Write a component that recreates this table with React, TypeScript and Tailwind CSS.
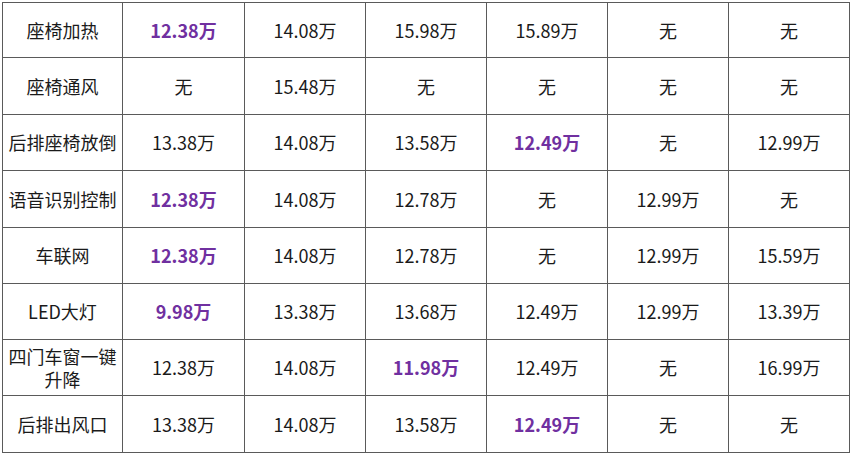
import React from "react";

type Cell = { t: string; hl?: boolean };

const P = (t: string): Cell => ({ t, hl: true });
const N = (t: string): Cell => ({ t });

const rows: { label: React.ReactNode; cells: Cell[]; h: string }[] = [
  { label: "座椅加热", h: "h-[54px]", cells: [P("12.38万"), N("14.08万"), N("15.98万"), N("15.89万"), N("无"), N("无")] },
  { label: "座椅通风", h: "h-[56px]", cells: [N("无"), N("15.48万"), N("无"), N("无"), N("无"), N("无")] },
  { label: "后排座椅放倒", h: "h-[55px]", cells: [N("13.38万"), N("14.08万"), N("13.58万"), P("12.49万"), N("无"), N("12.99万")] },
  { label: "语音识别控制", h: "h-[56px]", cells: [P("12.38万"), N("14.08万"), N("12.78万"), N("无"), N("12.99万"), N("无")] },
  { label: "车联网", h: "h-[55px]", cells: [P("12.38万"), N("14.08万"), N("12.78万"), N("无"), N("12.99万"), N("15.59万")] },
  { label: "LED大灯", h: "h-[55px]", cells: [P("9.98万"), N("13.38万"), N("13.68万"), N("12.49万"), N("12.99万"), N("13.39万")] },
  {
    label: (
      <>
        <span className="block">四门车窗一键</span>
        <span className="block">升降</span>
      </>
    ),
    h: "h-[55px]",
    cells: [N("12.38万"), N("14.08万"), P("11.98万"), N("12.49万"), N("无"), N("16.99万")],
  },
  { label: "后排出风口", h: "h-[56px]", cells: [N("13.38万"), N("14.08万"), N("13.58万"), P("12.49万"), N("无"), N("无")] },
];

export default function App() {
  return (
    <div
      className="w-[852px] h-[455px] bg-white pl-[2px] pt-[2px]"
      style={{ fontFamily: '"Noto Sans CJK SC", "Noto Sans", sans-serif' }}
    >
      <div className="inline-grid grid-cols-[119px_121px_120px_120px_120px_120px_120px] gap-px bg-[#5a5a5a] p-px">
        {rows.map((r, i) => (
          <React.Fragment key={i}>
            <div
              className={`${r.h} bg-white flex flex-col items-center justify-center text-center text-[18px] leading-[23px] text-[#1a1a1a]`}
            >
              {r.label}
            </div>
            {r.cells.map((c, j) => (
              <div
                key={j}
                className={`${r.h} bg-white flex items-center justify-center text-[18px] ${
                  c.hl ? "font-bold text-[#7030a0]" : "text-[#1a1a1a]"
                }`}
              >
                {c.t}
              </div>
            ))}
          </React.Fragment>
        ))}
      </div>
    </div>
  );
}
